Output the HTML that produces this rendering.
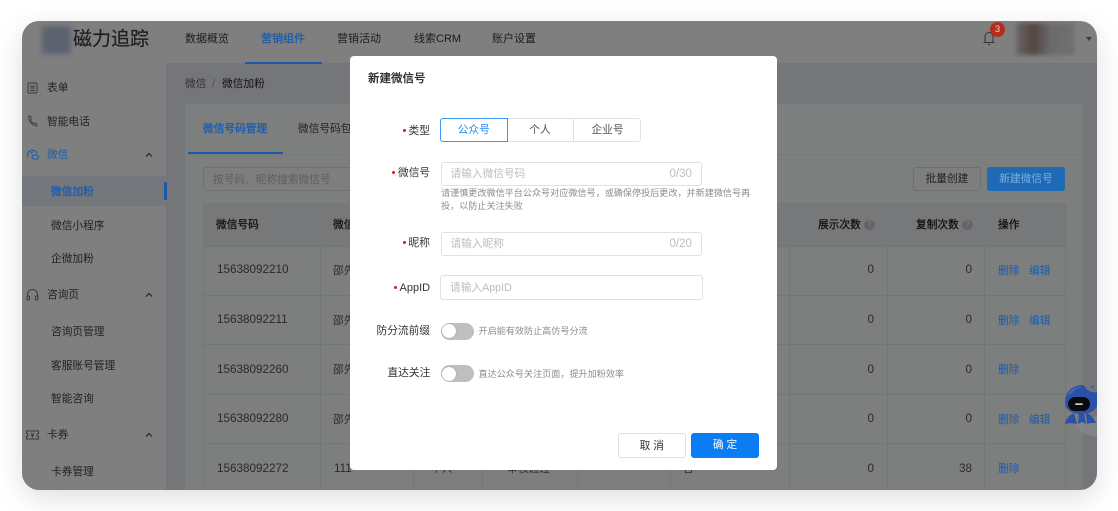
<!DOCTYPE html>
<html lang="zh"><head><meta charset="utf-8"><title>新建微信号</title>
<style>
*{box-sizing:border-box}
html,body{margin:0;padding:0;background:#fff;width:1118px;height:511px;overflow:hidden}
body{font-family:"Liberation Sans","Noto Sans CJK SC",sans-serif;font-size:10.7px;color:#444}
.abs,.t{position:absolute}
.t{line-height:20px;height:20px;white-space:nowrap}
#shadow{position:absolute;left:21.5px;top:21px;width:1075.5px;height:469px;border-radius:17px;box-shadow:0 8px 28px rgba(0,0,0,.13)}
#win{position:absolute;left:21.5px;top:21px;width:1075.5px;height:469px;border-radius:17px;overflow:hidden;background:#ebedf2}
#inner{position:absolute;left:-21.5px;top:-21px;width:1118px;height:511px;filter:blur(.35px)}
#overlay{position:absolute;left:0;top:0;width:1118px;height:511px;background:rgba(0,0,0,.5);z-index:2}
.top{z-index:5}
.bl,.op{color:#1b5cab;z-index:5}
.b{-webkit-text-stroke:.3px currentColor}
.h{color:#222;-webkit-text-stroke:.25px #222}
.line{position:absolute;background:#e9eaee}
#dlg{position:absolute;left:350px;top:56px;width:427px;height:414px;background:#fff;border-radius:4px;filter:blur(.25px)}
.lab{color:#333;font-size:10.7px}
.star{position:absolute;width:3px;height:3px;border-radius:50%;background:#f01414}
.inp{position:absolute;border:1px solid #dfe1e5;border-radius:3px;height:24.5px;background:#fff}
.ph{color:#bdbdbd}
.cnt{color:#bdbdbd;font-size:11.5px}
.sw{position:absolute;left:90.5px;width:33.5px;height:17px;border-radius:9px;background:#bfbfbf}
.sw i{position:absolute;left:1.5px;top:1.5px;width:14px;height:14px;border-radius:50%;background:#fff;box-shadow:0 0 1px rgba(0,0,0,.4)}
.hint{color:#8c8c8c;font-size:9.1px}
.num{text-align:right;color:#555;font-size:11.7px}
.n{color:#555;font-size:11.7px}
.c{color:#555}
.nav{font-size:11px;color:#3a3a3a}
</style></head>
<body>
<div id="shadow"></div>
<div id="win"><div id="inner">
  <!-- top bar -->
  <div class="abs" style="left:0;top:0;width:1118px;height:63px;background:#fff"></div>
  <div class="abs" style="left:42px;top:26px;width:29px;height:28px;background:#b9c3e0;filter:blur(3px)"></div>
  <div class="t" style="left:73px;top:30px;font-size:19px;color:#3c3c3c;-webkit-text-stroke:.2px #3c3c3c">磁力追踪</div>
  <div class="t nav" style="left:185px;top:29px">数据概览</div>
  <div class="t bl b" style="left:261px;top:29px;font-size:11px">营销组件</div>
  <div class="abs top" style="left:245px;top:61.5px;width:77px;height:2px;background:#1a5aa8"></div>
  <div class="t nav" style="left:337px;top:29px">营销活动</div>
  <div class="t nav" style="left:414px;top:29px">线索CRM</div>
  <div class="t nav" style="left:492px;top:29px">账户设置</div>
  <svg class="abs" style="left:981px;top:30px" width="16" height="16" viewBox="0 0 16 16" fill="none" stroke="#666" stroke-width="1"><path d="M2.500 12.500h11M4 12.500V6.500a4 4 0 0 1 8 0v6M7 14.500h2"/></svg>
  <div class="abs top" style="left:990px;top:22px;width:15px;height:15px;border-radius:50%;background:#b42c1c;color:#e8c8c4;font-size:9.500px;line-height:15px;text-align:center">3</div>
  <div class="abs" style="left:1016px;top:23px;width:59px;height:32px;background:linear-gradient(90deg,#d9cfcd,#b8a09c 20%,#a88c88 30%,#d8d6d6 60%,#e2e2e2);filter:blur(2px)"></div>
  <div class="abs" style="left:1085.5px;top:37px;border:3.5px solid transparent;border-top:4px solid #777"></div>

  <!-- sidebar -->
  <div class="abs" style="left:0;top:63px;width:166px;height:448px;background:#fff"></div>
  <div class="abs" style="left:21px;top:176px;width:145px;height:30px;background:#e8eef8"></div>
  <div class="abs top" style="left:163.500px;top:182px;width:3px;height:18px;background:#1a5aa8;border-radius:1px"></div>
  <svg class="abs" style="left:27px;top:81px" width="12" height="14" viewBox="0 0 12 14" fill="none" stroke="#777" stroke-width="1"><rect x="1" y="2" width="9" height="10" rx="1"/><path d="M3 5h5M3 7h5M3 9.500h5"/></svg>
  <svg class="abs" style="left:27px;top:114px" width="12" height="14" viewBox="0 0 12 14" fill="none" stroke="#888" stroke-width="1"><path d="M1.500 2.500l2-.5 1 2.500-1 1c.5 2 2 3.500 3.500 4.200l1.200-.7 2 1.500-.5 1.500C5 11.500 1.500 7 1.500 2.500z"/></svg>
  <svg class="abs top" style="left:26px;top:147px" width="14" height="14" viewBox="0 0 14 14" fill="none" stroke="#1b5cab" stroke-width="1.100"><path d="M2 10.500A5 5 0 1 1 11 6"/><path d="M5 7a2 2 0 0 1 2-2"/><rect x="6" y="8" width="6.500" height="4" rx="2"/></svg>
  <div class="t" style="left:47px;top:78px">表单</div>
  <div class="t" style="left:47px;top:112px">智能电话</div>
  <div class="t bl" style="left:47px;top:145px">微信</div>
  <div class="t bl b" style="left:51px;top:182px">微信加粉</div>
  <div class="t" style="left:51px;top:216px">微信小程序</div>
  <div class="t" style="left:51px;top:249px">企微加粉</div>
  <svg class="abs" style="left:26px;top:288px" width="13" height="14" viewBox="0 0 13 14" fill="none" stroke="#777" stroke-width="1"><path d="M1.500 9V6.500a5 5 0 0 1 10 0V9"/><rect x="1" y="8" width="2.500" height="4" rx="1"/><rect x="9.500" y="8" width="2.500" height="4" rx="1"/></svg>
  <div class="t" style="left:47px;top:285px">咨询页</div>
  <div class="t" style="left:51px;top:322px">咨询页管理</div>
  <div class="t" style="left:51px;top:356px">客服账号管理</div>
  <div class="t" style="left:51px;top:389px">智能咨询</div>
  <svg class="abs" style="left:26px;top:429px" width="13" height="12" viewBox="0 0 13 12" fill="none" stroke="#777" stroke-width="1"><path d="M.5 2h12v2.500a1.500 1.500 0 0 0 0 3V10H.5V7.500a1.500 1.500 0 0 0 0-3z"/><path d="M5 4l1.500 2L8 4M5 6.500h3M6.500 6v2.500"/></svg>
  <div class="t" style="left:47px;top:425px">卡券</div>
  <div class="t" style="left:51px;top:462px">卡券管理</div>
  <svg class="abs" style="left:145px;top:151.500px" width="8" height="6" viewBox="0 0 8 6" fill="none" stroke="#333" stroke-width="1"><path d="M1 4.500l3-3 3 3"/></svg>
  <svg class="abs" style="left:145px;top:292px" width="8" height="6" viewBox="0 0 8 6" fill="none" stroke="#333" stroke-width="1"><path d="M1 4.500l3-3 3 3"/></svg>
  <svg class="abs" style="left:145px;top:432px" width="8" height="6" viewBox="0 0 8 6" fill="none" stroke="#333" stroke-width="1"><path d="M1 4.500l3-3 3 3"/></svg>

  <!-- content -->
  <div class="t" style="left:185px;top:74px;color:#666">微信</div>
  <div class="t" style="left:212px;top:74px;color:#999">/</div>
  <div class="t" style="left:222px;top:74px;color:#222">微信加粉</div>
  <div class="abs" style="left:185px;top:104px;width:898px;height:407px;background:#fbfcfd"></div>
  <div class="abs" style="left:185px;top:154px;width:898px;height:1px;background:#eef0f3"></div>
  <div class="t bl b" style="left:203px;top:119px">微信号码管理</div>
  <div class="abs top" style="left:188px;top:152px;width:95px;height:2px;background:#1a5aa8"></div>
  <div class="t" style="left:298px;top:119px">微信号码包</div>
  <div class="abs" style="left:203px;top:167px;width:160px;height:24px;border:1px solid #dfe1e5;border-radius:3px"></div>
  <div class="t ph" style="left:213px;top:170px">按号码、昵称搜索微信号</div>
  <div class="abs" style="left:913px;top:167px;width:68px;height:24px;border:1px solid #dcdee2;border-radius:3px;text-align:center;line-height:23px;color:#444">批量创建</div>
  <div class="abs top" style="left:987px;top:167px;width:78px;height:24px;background:#1e6ab6;border-radius:3px;text-align:center;line-height:25px;color:#7fb0de">新建微信号</div>

  <!-- table -->
  <div class="abs" style="left:203px;top:203px;width:862px;height:43px;background:#eff0f3;border-radius:3px 3px 0 0"></div>
  <div class="line" style="left:203px;top:203px;width:1px;height:308px"></div>
  <div class="line" style="left:320px;top:203px;width:1px;height:308px"></div>
  <div class="line" style="left:413px;top:443px;width:1px;height:68px"></div>
  <div class="line" style="left:482px;top:443px;width:1px;height:68px"></div>
  <div class="line" style="left:577px;top:443px;width:1px;height:68px"></div>
  <div class="line" style="left:670px;top:443px;width:1px;height:68px"></div>
  <div class="line" style="left:789px;top:203px;width:1px;height:308px"></div>
  <div class="line" style="left:887px;top:203px;width:1px;height:308px"></div>
  <div class="line" style="left:984px;top:203px;width:1px;height:308px"></div>
  <div class="line" style="left:1064.500px;top:203px;width:1px;height:308px"></div>
  <div class="line" style="left:203px;top:245.500px;width:862px;height:1px"></div>
  <div class="line" style="left:203px;top:295px;width:862px;height:1px"></div>
  <div class="line" style="left:203px;top:344px;width:862px;height:1px"></div>
  <div class="line" style="left:203px;top:394px;width:862px;height:1px"></div>
  <div class="line" style="left:203px;top:443px;width:862px;height:1px"></div>

  <div class="t h" style="left:216px;top:215px">微信号码</div>
  <div class="t h" style="left:333px;top:215px">微信昵称</div>
  <div class="t h" style="left:818px;top:215px">展示次数</div>
  <div class="abs" style="left:864px;top:219.500px;width:10.500px;height:10.500px;border-radius:50%;background:#c6c8cc;color:#fff;font-size:8px;line-height:10.500px;text-align:center">?</div>
  <div class="t h" style="left:916px;top:215px">复制次数</div>
  <div class="abs" style="left:962px;top:219.500px;width:10.500px;height:10.500px;border-radius:50%;background:#c6c8cc;color:#fff;font-size:8px;line-height:10.500px;text-align:center">?</div>
  <div class="t h" style="left:998px;top:215px">操作</div>

  <div class="t n" style="left:217px;top:260px">15638092210</div>
  <div class="t c" style="left:333px;top:261px">邵先生</div>
  <div class="t num" style="left:849px;width:25px;top:260px">0</div>
  <div class="t num" style="left:947px;width:25px;top:260px">0</div>
  <div class="t op" style="left:998px;top:261px">删除</div>
  <div class="t op" style="left:1029px;top:261px">编辑</div>

  <div class="t n" style="left:217px;top:310px">15638092211</div>
  <div class="t c" style="left:333px;top:311px">邵先生</div>
  <div class="t num" style="left:849px;width:25px;top:310px">0</div>
  <div class="t num" style="left:947px;width:25px;top:310px">0</div>
  <div class="t op" style="left:998px;top:311px">删除</div>
  <div class="t op" style="left:1029px;top:311px">编辑</div>

  <div class="t n" style="left:217px;top:359.500px">15638092260</div>
  <div class="t c" style="left:333px;top:360px">邵先生</div>
  <div class="t num" style="left:849px;width:25px;top:359.500px">0</div>
  <div class="t num" style="left:947px;width:25px;top:359.500px">0</div>
  <div class="t op" style="left:998px;top:360px">删除</div>

  <div class="t n" style="left:217px;top:409px">15638092280</div>
  <div class="t c" style="left:333px;top:410px">邵先生</div>
  <div class="t num" style="left:849px;width:25px;top:409px">0</div>
  <div class="t num" style="left:947px;width:25px;top:409px">0</div>
  <div class="t op" style="left:998px;top:410px">删除</div>
  <div class="t op" style="left:1029px;top:410px">编辑</div>

  <div class="t n" style="left:217px;top:458.500px">15638092272</div>
  <div class="t n" style="left:334px;top:458.500px">111</div>
  <div class="t c" style="left:431px;top:459px">个人</div>
  <div class="abs" style="left:496px;top:467px;width:3px;height:3px;border-radius:50%;background:#7ccb3c"></div>
  <div class="t c" style="left:507px;top:459px">审核通过</div>
  <div class="t c" style="left:683px;top:459px">否</div>
  <div class="t num" style="left:849px;width:25px;top:458.500px">0</div>
  <div class="t num" style="left:947px;width:25px;top:458.500px">38</div>
  <div class="t op" style="left:998px;top:459px">删除</div>

  <!-- robot -->
  <svg class="abs top" style="left:1060px;top:380px" width="40" height="62" viewBox="0 0 40 62">
    <path d="M14 43c6 9 14 14 23 14V36z" fill="#8b8e94" opacity=".55"/>
    <path d="M5 44c1-5 4-9 9-11l3 11-6-1zM18 44l1-11h5l2 11-4-2zM27 44l-1-11c4 1 8 5 10 10l-5 0z" fill="#2c52a8"/>
    <path d="M5 22C5 12 13 5 22 5c3 0 3.500 3.500 6.500 5.500 3 1.800 6 2 8.500 1.500V26c-2 5-8 8-15 8C12 34 5 30 5 22z" fill="#2c52a8"/>
    <path d="M8 14C11 9 16 6.500 22 6.500c-5 2-9 4-11 8z" fill="#3f68bd"/>
    <circle cx="32.500" cy="6.800" r="1.500" fill="#3a62b6"/>
    <rect x="8" y="17" width="22" height="14" rx="7" fill="#0a0a10"/>
    <rect x="15" y="23.200" width="8" height="1.800" rx=".9" fill="#c8c8c8"/>
  </svg>

  <div id="overlay"></div>
</div></div>

<!-- dialog -->
<div id="dlg">
  <div class="t" style="left:18px;top:12.500px;font-size:11.500px;color:#222;-webkit-text-stroke:.3px #222">新建微信号</div>

  <div class="star" style="left:52.500px;top:73px"></div>
  <div class="t lab" style="left:58.500px;top:64.500px">类型</div>
  <div class="abs" style="left:90px;top:62px;width:201px;height:24px;border:1px solid #dfe1e5;border-radius:3px"></div>
  <div class="abs" style="left:90px;top:62px;width:67.500px;height:24px;border:1px solid #3c96f5;border-radius:3px 0 0 3px;text-align:center;line-height:23px;color:#1f8bf7">公众号</div>
  <div class="abs" style="left:157px;top:62px;width:67px;height:24px;border-right:1px solid #dfe1e5;text-align:center;line-height:25px;color:#555">个人</div>
  <div class="abs" style="left:224px;top:62px;width:67px;height:24px;text-align:center;line-height:25px;color:#555">企业号</div>

  <div class="star" style="left:42px;top:115px"></div>
  <div class="t lab" style="left:48px;top:107px">微信号</div>
  <div class="inp" style="left:91px;top:105.500px;width:261px"></div>
  <div class="t ph" style="left:100.500px;top:107.500px">请输入微信号码</div>
  <div class="t cnt" style="left:319.500px;top:107.500px">0/30</div>
  <div class="t hint" style="left:91px;top:127px">请谨慎更改微信平台公众号对应微信号，或确保停投后更改，并新建微信号再</div>
  <div class="t hint" style="left:91px;top:140px">投，以防止关注失败</div>

  <div class="star" style="left:52.500px;top:185px"></div>
  <div class="t lab" style="left:58.500px;top:177px">昵称</div>
  <div class="inp" style="left:91px;top:175.500px;width:261px"></div>
  <div class="t ph" style="left:100.500px;top:177.500px">请输入昵称</div>
  <div class="t cnt" style="left:319.500px;top:177.500px">0/20</div>

  <div class="star" style="left:44px;top:230px"></div>
  <div class="t lab" style="left:49.500px;top:221.500px;font-size:11px">AppID</div>
  <div class="inp" style="left:90px;top:219px;width:263px"></div>
  <div class="t ph" style="left:100px;top:221.500px">请输入AppID</div>

  <div class="t lab" style="left:26.500px;top:264.500px">防分流前缀</div>
  <div class="sw" style="top:266.500px"><i></i></div>
  <div class="t hint" style="left:128.500px;top:265px">开启能有效防止高仿号分流</div>

  <div class="t lab" style="left:37.500px;top:306.500px">直达关注</div>
  <div class="sw" style="top:309px"><i></i></div>
  <div class="t hint" style="left:128.500px;top:308px">直达公众号关注页面，提升加粉效率</div>

  <div class="abs" style="left:268px;top:377px;width:67.500px;height:24.500px;border:1px solid #dfe1e5;border-radius:3px;text-align:center;line-height:24px;color:#333">取 消</div>
  <div class="abs" style="left:341px;top:377px;width:68px;height:24.500px;background:#0a7df5;border-radius:3px;text-align:center;line-height:25.500px;color:#fff">确 定</div>
</div>
</body></html>
